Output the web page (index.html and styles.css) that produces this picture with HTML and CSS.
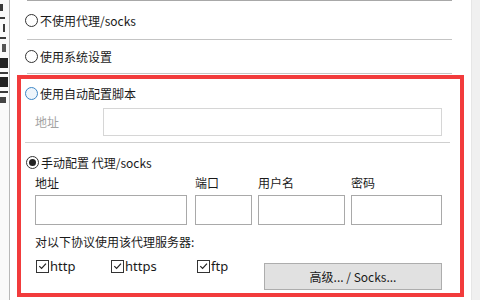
FILE: index.html
```html
<!DOCTYPE html>
<html lang="zh-CN">
<head>
<meta charset="utf-8">
<title>代理设置</title>
<link rel="stylesheet" href="styles.css">
</head>
<body>
<div class="screen">
  <div class="edge-left">
    <span class="mk m1"></span><span class="mk m2"></span><span class="mk m3"></span><span class="mk m4"></span>
    <span class="mk m5"></span><span class="mk m6"></span><span class="mk m7"></span><span class="mk m8"></span>
    <span class="mk m9"></span><span class="mk m10"></span>
  </div>
  <div class="main">
    <div class="sep sep-top"></div>
    <label class="row opt"><span class="radio"></span><span>不使用代理/socks</span></label>
    <div class="sep"></div>
    <label class="row opt opt2"><span class="radio"></span><span>使用系统设置</span></label>
    <div class="sep"></div>
    <div class="highlight">
      <label class="row opt3"><span class="radio hover"></span><span>使用自动配置脚本</span></label>
      <div class="addr-row">
        <span class="muted">地址</span>
        <span class="input disabled wide"></span>
      </div>
      <div class="sep inner"></div>
      <label class="row opt4"><span class="radio checked"></span><span>手动配置 代理/socks</span></label>
      <div class="fields">
        <span class="flabel">地址</span>
        <span class="flabel">端口</span>
        <span class="flabel">用户名</span>
        <span class="flabel">密码</span>
        <span class="input f1"></span>
        <span class="input"></span>
        <span class="input"></span>
        <span class="input"></span>
      </div>
      <div class="proto">对以下协议使用该代理服务器:</div>
      <div class="checks">
        <label class="chk c1"><span class="box"><svg viewBox="0 0 12 12" width="12" height="12"><path d="M2.5 6.2 L5 8.7 L9.8 3.4" fill="none" stroke="#222" stroke-width="1.3"/></svg></span>http</label>
        <label class="chk c2"><span class="box"><svg viewBox="0 0 12 12" width="12" height="12"><path d="M2.5 6.2 L5 8.7 L9.8 3.4" fill="none" stroke="#222" stroke-width="1.3"/></svg></span>https</label>
        <label class="chk c3"><span class="box"><svg viewBox="0 0 12 12" width="12" height="12"><path d="M2.5 6.2 L5 8.7 L9.8 3.4" fill="none" stroke="#222" stroke-width="1.3"/></svg></span>ftp</label>
        <button class="btn">高级... / Socks...</button>
      </div>
    </div>
  </div>
  <div class="edge-right"></div>
</div>
</body>
</html>
```
FILE: styles.css
```css
* { box-sizing: border-box; }
html, body { margin: 0; padding: 0; background: #fff; }
body {
  width: 480px; height: 300px; overflow: hidden;
  font-family: "Noto Sans CJK SC", "Noto Sans", sans-serif;
  font-size: 12px; color: #1a1a1a;
}
.screen { display: flex; width: 480px; height: 300px; }
.edge-left {
  width: 10px; flex: none; overflow: hidden;
  border-right: 1px solid #b9b9b9; background: #fafafa;
  display: flex; flex-direction: column; align-items: flex-start;
  padding-top: 2px;
}
.mk { display: block; background: #3a3a3a; flex: none; }
.m1 { width: 3px; height: 7px; margin-top: 2px; }
.m2 { width: 5px; height: 2px; margin-top: 6px; }
.m3 { width: 2px; height: 8px; margin-top: 5px; margin-left: 3px; }
.m4 { width: 6px; height: 2px; margin-top: 5px; }
.m5 { width: 4px; height: 8px; margin-top: 5px; margin-left: 2px; background: #555; }
.m6 { width: 8px; height: 10px; margin-top: 6px; background: #222; }
.m7 { width: 8px; height: 2px; margin-top: 4px; }
.m8 { width: 8px; height: 10px; margin-top: 3px; background: #222; }
.m9 { width: 8px; height: 2px; margin-top: 4px; }
.m10 { width: 6px; height: 6px; margin-top: 4px; background: #444; }
.main { flex: 1; display: flex; flex-direction: column; }
.edge-right { width: 9px; flex: none; background: #f0f0f0; border-left: 1px solid #e6e6e6; }

.sep { height: 1px; background: #c4c4c4; margin: 0 19px 0 17px; flex: none; }
.sep-top { background: #a8a8a8; }
.row { display: flex; align-items: center; gap: 2px; }
.opt { height: 38px; padding-left: 15px; }
.opt.opt2 { height: 33px; }
.radio {
  width: 13px; height: 13px; border-radius: 50%;
  border: 1px solid #333; background: #fff; flex: none;
  display: flex; align-items: center; justify-content: center;
}
.radio.hover { border-color: #3d86c6; background: #eef5fb; }
.radio.checked::after {
  content: ""; width: 7px; height: 7px; border-radius: 50%; background: #222;
}

.highlight {
  margin: 1px 7px 0 7px; height: 222px;
  border: 4px solid #f23b3c;
  display: flex; flex-direction: column;
}
.opt3 { height: 28px; padding-left: 4px; }
.addr-row { display: flex; align-items: center; height: 29px; padding-left: 14px; }
.muted { color: #a3a3a3; width: 68px; }
.input { display: block; height: 30px; border: 1px solid #a9a9a9; background: #fff; }
.input.disabled { border-color: #d6d6d6; height: 28px; }
.wide { width: 339px; }
.sep.inner { margin: 6px 10px 0 4px; background: #cfcfcf; }
.opt4 { height: 38px; padding-left: 5px; }
.fields {
  display: grid; padding-left: 14px;
  grid-template-columns: 154px 57px 87px 91px; column-gap: 6px;
  grid-template-rows: 16px 30px; row-gap: 4px;
  margin-top: -6px;
}
.flabel { line-height: 16px; }
.input.f1 { width: 152px; }
.proto { padding-left: 14px; margin-top: 9px; line-height: 16px; }
.checks { display: flex; align-items: flex-start; padding-left: 15px; }
.chk { display: flex; align-items: center; gap: 1px; height: 16px; margin-top: 8px; font-size: 13px; font-family: "Noto Sans", sans-serif; }
.c1 { width: 75px; }
.c2 { width: 86px; }
.c3 { width: 67px; }
.box { width: 13px; height: 13px; border: 1px solid #333; display: flex; align-items: center; justify-content: center; }
.box svg { display: block; }
.btn {
  width: 178px; height: 27px; margin: 13px 0 0 0;
  background: #e1e1e1; border: 1px solid #adadad;
  font-family: "Noto Sans CJK SC", "Noto Sans", sans-serif; font-size: 12px; color: #1a1a1a;
  padding: 0;
}
```
